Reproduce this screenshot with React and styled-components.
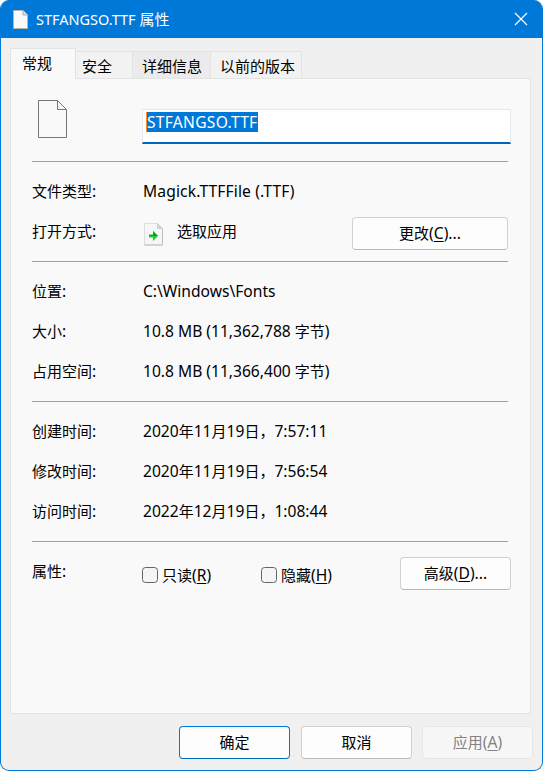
import React from "react";
import styled, { createGlobalStyle } from "styled-components";

const GlobalStyle = createGlobalStyle`
  * { box-sizing: border-box; }
  body {
    margin: 0;
    background: #fff;
    font-family: "Noto Sans CJK SC", "Noto Sans", sans-serif;
    font-size: 15px;
    line-height: 20px;
    color: #000;
  }
`;

const Window = styled.main`
  width: 543px;
  height: 771px;
  display: flex;
  flex-direction: column;
  background: #f0f0f0;
  border: 1px solid #0078d7;
  border-top: 0;
  border-radius: 9px;
  overflow: hidden;
`;

const Latin = styled.span`
  font-family: "Noto Sans", "Open Sans", sans-serif;
  font-size: 15.6px;
`;

const TitleBar = styled.header`
  height: 38px;
  flex: none;
  display: flex;
  align-items: center;
  padding: 0 14px 0 12px;
  background: #0078d7;
  color: #fff;
`;

const Title = styled.h1`
  flex: 1;
  margin: 0 0 0 8px;
  font-size: 15px;
  font-weight: 400;
  white-space: nowrap;
  ${Latin} {
    font-size: 14.5px;
  }
`;

const CloseButton = styled.button`
  display: flex;
  padding: 0;
  border: 0;
  background: none;
  color: #fff;
`;

const TabList = styled.nav`
  height: 40px;
  flex: none;
  display: flex;
  align-items: flex-end;
  padding-left: 9px;
`;

const Tab = styled.button`
  width: ${(p) => p.$width}px;
  height: ${(p) => (p.$active ? 31 : 27)}px;
  margin-bottom: ${(p) => (p.$active ? -1 : 0)}px;
  padding: ${(p) => (p.$active ? "0 0 3px 11px" : "1px 0 0 " + p.$inset + "px")};
  border: 1px solid #e3e3e3;
  border-bottom: 0;
  border-left-width: ${(p) => (p.$active ? 1 : 0)}px;
  background: ${(p) => (p.$active ? "#f9f9f9" : p.$hot ? "#ebebeb" : "#f2f2f2")};
  position: relative;
  z-index: ${(p) => (p.$active ? 1 : 0)};
  font: inherit;
  color: inherit;
  text-align: left;
  white-space: nowrap;
`;

const Panel = styled.section`
  width: 521px;
  height: 636px;
  flex: none;
  margin-left: 9px;
  padding: 0 0 0 21px;
  background: #f9f9f9;
  border: 1px solid #e3e3e3;
`;

const FileHeader = styled.div`
  height: 82px;
  display: flex;
  align-items: flex-start;
`;

const FileIconCell = styled.div`
  width: 110px;
  padding: 21px 0 0 6px;
`;

const NameField = styled.div`
  width: 369px;
  height: 35px;
  margin-top: 30px;
  padding: 2px 3px;
  background: #fff;
  border: 1px solid #e5e9ee;
  border-bottom: 2px solid #0067c0;
`;

const Selection = styled.span`
  display: inline-block;
  height: 20px;
  line-height: 20px;
  letter-spacing: 0.28px;
  color: #fff;
  background: #0078d7;
  border-left: 1px solid #ff8728;
`;

const Section = styled.div`
  width: 476px;
  height: ${(p) => p.$height}px;
  padding-top: 9px;
  border-top: 1px solid #a0a0a0;
`;

const Row = styled.div`
  height: 40px;
  display: flex;
  align-items: center;
  white-space: nowrap;
`;

const Label = styled.span`
  width: 111px;
  flex: none;
`;

const Value = styled.span`
  flex: 1;
  letter-spacing: ${(p) => p.$tracking || 0}px;
`;

const AppIconCell = styled.span`
  width: 33px;
  height: 24px;
  margin: 7px 0 0 1px;
`;

const PushButton = styled.button`
  width: ${(p) => p.$width}px;
  height: 33px;
  flex: none;
  padding: 0 0 1px;
  border: 1px solid ${(p) => (p.$primary ? "#0078d7" : "#d0d0d0")};
  border-bottom-color: ${(p) => (p.$primary ? "#006cbe" : "#bababa")};
  border-radius: 4px;
  background: #fdfdfd;
  font: inherit;
  color: #000;
  &:disabled {
    margin-left: -1px;
    background: #f7f7f7;
    border-color: #e6e6e6;
    color: #838383;
  }
`;

const ChangeButton = styled(PushButton)`
  margin-top: 4px;
`;

const AdvancedButton = styled(PushButton)`
  margin: 4px -3px 0 auto;
`;

const CheckLabel = styled.label`
  width: ${(p) => p.$width}px;
  display: flex;
  align-items: center;
  gap: 4px;
  margin: 8px 0 0 -1px;
`;

const Checkbox = styled.input.attrs({ type: "checkbox" })`
  appearance: none;
  width: 16px;
  height: 16px;
  margin: 0;
  border: 1px solid #646464;
  border-radius: 3.5px;
  background: #f5f5f5;
`;

const Footer = styled.footer`
  display: flex;
  justify-content: flex-end;
  gap: 11px;
  padding: 12px 9px 0 0;
`;

const Mnemonic = styled.span`
  text-decoration: underline;
  text-decoration-thickness: 1px;
  text-underline-offset: 2px;
`;

function Text({ children }) {
  return children
    .split(/([\x20-\x7e]+)/)
    .map((run, i) => (i % 2 ? <Latin key={i}>{run}</Latin> : run));
}

function KeyText({ text, letter, tail = "" }) {
  return (
    <span>
      {text}
      <Latin>
        (<Mnemonic>{letter}</Mnemonic>){tail}
      </Latin>
    </span>
  );
}

function TitleIcon() {
  return (
    <svg width="15" height="19" viewBox="0 0 15 19">
      <path d="M.5.5h9.5l4.5 4.5v13.5h-14z" fill="#fafafa" stroke="#b9b3aa" />
      <path d="M10 .5v4.5h4.5" fill="#e3e3e3" stroke="#aaa" />
    </svg>
  );
}

function PageIcon() {
  return (
    <svg width="29" height="38" viewBox="0 0 29 38" display="block">
      <path d="M.5.5h19l9 9v28H.5z" fill="#f9f9f9" stroke="#777770" />
      <path d="M19.5.5v9h9" fill="none" stroke="#777770" />
    </svg>
  );
}

function AppIcon() {
  return (
    <svg width="20" height="23" viewBox="0 0 20 23" display="block">
      <path d="M.5.5h13l5 5V22H.5z" fill="#f6f6f6" stroke="#dedede" />
      <path d="M.5 22h18V6" fill="none" stroke="#bdbdbd" />
      <path d="M13.500 .5v5h5z" fill="#d4d4d4" stroke="#c5c5c5" strokeWidth=".6" />
      <path d="M5 11.800h4V8l5 5-5 5v-3.500h-4z" fill="#1fd038" />
      <path d="M5 11.800h4V8l5 5H5z" fill="#109d24" />
    </svg>
  );
}

function CloseIcon() {
  return (
    <svg width="14" height="14" viewBox="0 0 14 14">
      <path d="M1 1l12 12M13 1L1 13" stroke="currentColor" strokeWidth="1.15" />
    </svg>
  );
}

const location = [
  ["位置:", "C:\\Windows\\Fonts"],
  ["大小:", "10.8 MB (11,362,788 字节)"],
  ["占用空间:", "10.8 MB (11,366,400 字节)"],
];

const times = [
  ["创建时间:", "2020年11月19日，7:57:11"],
  ["修改时间:", "2020年11月19日，7:56:54"],
  ["访问时间:", "2022年12月19日，1:08:44"],
];

function Property({ label, value, tracking }) {
  return (
    <Row>
      <Label><Text>{label}</Text></Label>
      <Value $tracking={tracking}><Text>{value}</Text></Value>
    </Row>
  );
}

export default function App() {
  return (
    <>
      <GlobalStyle />
      <Window>
        <TitleBar>
          <TitleIcon />
          <Title><Text>STFANGSO.TTF 属性</Text></Title>
          <CloseButton aria-label="关闭"><CloseIcon /></CloseButton>
        </TitleBar>
        <TabList>
          <Tab $active $width={66}>常规</Tab>
          <Tab $width={57} $inset={6}>安全</Tab>
          <Tab $hot $width={78} $inset={9}>详细信息</Tab>
          <Tab $width={91} $inset={9}>以前的版本</Tab>
        </TabList>
        <Panel>
          <FileHeader>
            <FileIconCell><PageIcon /></FileIconCell>
            <NameField>
              <Selection><Text>STFANGSO.TTF</Text></Selection>
            </NameField>
          </FileHeader>
          <Section $height={100}>
            <Property label="文件类型:" value="Magick.TTFFile (.TTF)" tracking={0.14} />
            <Row>
              <Label><Text>打开方式:</Text></Label>
              <AppIconCell><AppIcon /></AppIconCell>
              <Value>选取应用</Value>
              <ChangeButton $width={156}>
                <KeyText text="更改" letter="C" tail="..." />
              </ChangeButton>
            </Row>
          </Section>
          <Section $height={140}>
            {location.map(([label, value]) => (
              <Property key={label} label={label} value={value} />
            ))}
          </Section>
          <Section $height={140}>
            {times.map(([label, value]) => (
              <Property key={label} label={label} value={value} />
            ))}
          </Section>
          <Section $height={90}>
            <Row>
              <Label><Text>属性:</Text></Label>
              <CheckLabel $width={120}>
                <Checkbox />
                <KeyText text="只读" letter="R" />
              </CheckLabel>
              <CheckLabel $width={100}>
                <Checkbox />
                <KeyText text="隐藏" letter="H" />
              </CheckLabel>
              <AdvancedButton $width={111}>
                <KeyText text="高级" letter="D" tail="..." />
              </AdvancedButton>
            </Row>
          </Section>
        </Panel>
        <Footer>
          <PushButton $primary $width={111}>确定</PushButton>
          <PushButton $width={111}>取消</PushButton>
          <PushButton disabled $width={111}>
            <KeyText text="应用" letter="A" />
          </PushButton>
        </Footer>
      </Window>
    </>
  );
}
